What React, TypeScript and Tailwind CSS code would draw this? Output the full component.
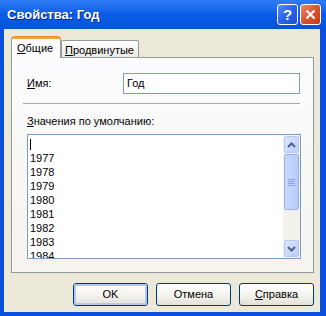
import React from "react";

const years = ["1977", "1978", "1979", "1980", "1981", "1982", "1983", "1984"];

function TitleButton({ kind }: { kind: "help" | "close" }) {
    const isClose = kind === "close";
    return (
        <div
            className={
                "w-[21px] h-[21px] rounded-[3px] border border-white flex items-center justify-center " +
                (isClose
                    ? "bg-gradient-to-br from-[#E88A6C] via-[#D8532E] to-[#C23A17]"
                    : "bg-gradient-to-br from-[#5A8CF5] via-[#2A62E8] to-[#1B4ED3]")
            }
        >
            {isClose ? (
                <svg width="11" height="11" viewBox="0 0 11 11">
                    <path d="M1.5 1.5 L9.5 9.5 M9.5 1.5 L1.5 9.5" stroke="white" strokeWidth="2.2" />
                </svg>
            ) : (
                <span className="text-white font-bold text-[15px] leading-none font-['Liberation_Sans',sans-serif]">?</span>
            )}
        </div>
    );
}

function XpButton({ label, underline, isDefault }: { label: string; underline?: boolean; isDefault?: boolean }) {
    return (
        <div className="w-[75px] h-[23px] rounded-[3px] border border-[#003C74] bg-gradient-to-b from-[#FFFFFF] via-[#F5F4EF] to-[#E3E1D8] flex">
            <div
                className={
                    "flex-1 rounded-[2px] flex items-center justify-center text-[11px] text-black " +
                    (isDefault ? "border-2 border-[#B2C8F3]" : "")
                }
            >
                {underline ? (
                    <span>
                        <span className="underline">{label[0]}</span>
                        {label.slice(1)}
                    </span>
                ) : (
                    label
                )}
            </div>
        </div>
    );
}

function Arrow({ up }: { up?: boolean }) {
    return (
        <div className="h-[17px] rounded-[2px] border border-[#B5C8F6] bg-gradient-to-br from-[#DDE7FE] to-[#B9CDFB] flex items-center justify-center">
            <svg width="9" height="6" viewBox="0 0 9 6">
                <path d={up ? "M1 5 L4.5 1.5 L8 5" : "M1 1 L4.5 4.5 L8 1"} stroke="#4D6185" strokeWidth="2" fill="none" />
            </svg>
        </div>
    );
}

export default function App() {
    return (
        <div className="w-[326px] h-[316px] bg-[#0A4FDB] flex flex-col font-['Liberation_Sans',sans-serif] select-none">
            {/* title bar */}
            <div className="h-[29px] flex items-center pl-[7px] pr-[5px] bg-gradient-to-b from-[#2F7BF5] via-[#0A5CE8] to-[#0653D8]">
                <span className="text-white font-bold text-[13px] [text-shadow:1px_1px_0_#0A2A80] flex-1">Свойства: Год</span>
                <div className="flex gap-[2px]">
                    <TitleButton kind="help" />
                    <TitleButton kind="close" />
                </div>
            </div>

            {/* client area */}
            <div className="flex-1 ml-[4px] mr-[6px] mb-[4px] bg-[#ECE9D8] pt-[7px] pl-[7px] pr-[6px] flex flex-col text-[11px] text-black">
                {/* tabs */}
                <div className="flex items-end h-[21px] relative z-10">
                    <div className="w-[50px] h-[22px] -mb-[1px] bg-[#FCFCFE] border-x border-[#919B9C] rounded-t-[3px] flex flex-col">
                        <div className="h-[3px] rounded-t-[3px] bg-[#F1A33D] border-t border-[#E68B2C]" />
                        <div className="flex-1 pl-[5px] pt-[1px]">
                            <span className="underline">О</span>бщие
                        </div>
                    </div>
                    <div className="w-[78px] h-[17px] bg-gradient-to-b from-[#FFFFFF] to-[#ECEBE6] border border-b-0 border-[#919B9C] rounded-t-[2px] pl-[3px] pt-[1px]">
                        <span className="underline">П</span>родвинутые
                    </div>
                </div>

                {/* tab panel */}
                <div className="h-[216px] border border-[#919B9C] bg-gradient-to-b from-[#FCFCFE] to-[#F4F3EE] flex flex-col pl-[15px] pr-[13px]">
                    <div className="flex items-center mt-[15px] h-[21px]">
                        <span className="w-[96px]">
                            <span className="underline">И</span>мя:
                        </span>
                        <div className="w-[177px] h-[21px] border border-[#7F9DB9] bg-white pl-[3px] flex items-center">Год</div>
                    </div>
                    <div className="h-[2px] mt-[9px] -ml-[4px] border-t border-[#A7A6AA] bg-white" />
                    <div className="mt-[10px] h-[13px] leading-[13px]">
                        <span className="underline">З</span>начения по умолчанию:
                    </div>
                    <div className="mt-[6px] w-[274px] h-[125px] border border-[#7F9DB9] bg-white flex">
                        <div className="flex-1 overflow-hidden pl-[2px] pt-[2px] leading-[14px]">
                            <div className="h-[14px] flex items-center">
                                <div className="w-px h-[11px] bg-black" />
                            </div>
                            {years.map((y) => (
                                <div key={y} className="h-[14px] leading-[14px]">
                                    {y}
                                </div>
                            ))}
                        </div>
                        <div className="w-[17px] bg-[#F3F1EC] flex flex-col p-px pb-[1px]">
                            <Arrow up />
                            <div className="mt-px h-[56px] rounded-[2px] border border-[#98B1E8] bg-gradient-to-r from-[#C9D8FC] to-[#B8CCFA] flex items-center justify-center">
                                <svg width="7" height="8" viewBox="0 0 7 8">
                                    <path d="M0 1.5 H7 M0 3.5 H7 M0 5.5 H7 M0 7.5 H7" stroke="#8CA4E0" strokeWidth="1" />
                                </svg>
                            </div>
                            <div className="flex-1" />
                            <Arrow />
                        </div>
                    </div>
                </div>

                {/* buttons */}
                <div className="flex justify-end gap-[8px] mt-[10px] pr-[0px]">
                    <XpButton label="OK" isDefault />
                    <XpButton label="Отмена" />
                    <XpButton label="Справка" underline />
                </div>
            </div>
        </div>
    );
}
